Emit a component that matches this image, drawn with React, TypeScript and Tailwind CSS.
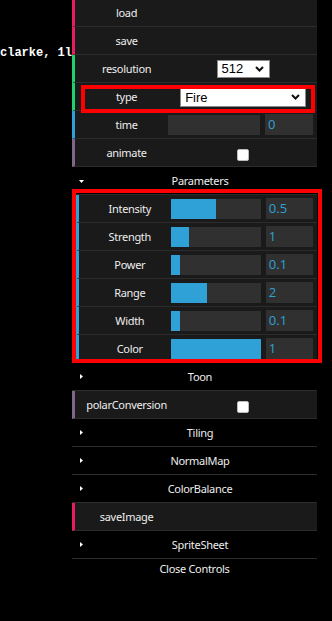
import React from 'react';

const FONT = { fontFamily: '"Noto Sans", "Open Sans", sans-serif' };

// dat.GUI style border colours per controller type
const BORDER: Record<string, string> = {
  fn: 'border-l-[#e61d5f]',
  bool: 'border-l-[#806787]',
  num: 'border-l-[#2fa1d6]',
  str: 'border-l-[#1ed36f]',
};

function Row({ kind, label, children }: { kind: string; label: string; children?: React.ReactNode }) {
  return (
    <div
      className={`flex h-[28px] items-center border-b border-l-[3px] border-b-[#2c2c2c] bg-[#1a1a1a] pl-[5px] pr-[4px] ${BORDER[kind]}`}
    >
      <div className="w-[40%] truncate pt-[2px] text-center text-[11px] tracking-[-0.3px] text-[#eeeeee]">{label}</div>
      <div className="flex h-full w-[60%] items-center">{children}</div>
    </div>
  );
}

function Select({ value, wide }: { value: string; wide?: boolean }) {
  return (
    <div
      className={`mx-auto flex items-center justify-between border border-[#8a8a8a] bg-white pl-[4px] pr-[5px] text-[13px] text-black ${
        wide ? 'mt-[1px] h-[20px] w-[90%]' : 'h-[18px] w-[53px]'
      }`}
      style={{ fontFamily: '"Liberation Sans", Arial, sans-serif' }}
    >
      <span className="leading-none">{value}</span>
      <svg width="9" height="6" viewBox="0 0 9 6" className="shrink-0">
        <path d="M1 1 L4.5 4.5 L8 1" fill="none" stroke="#111" strokeWidth="2" />
      </svg>
    </div>
  );
}

function Slider({ frac, value }: { frac: number; value: string }) {
  return (
    <>
      <div className="-ml-[5px] h-[20px] w-[66%] bg-[#303030]">
        <div className="h-full bg-[#2fa1d6]" style={{ width: `${frac * 100}%` }} />
      </div>
      <div
        className="ml-auto flex h-[21px] w-[calc(30%+6px)] items-center bg-[#303030] pl-[3px] text-[13px] text-[#2fa1d6]"
        style={{ fontFamily: '"Open Sans", sans-serif' }}
      >
        {value}
      </div>
    </>
  );
}

function Checkbox() {
  return (
    <div className="mx-auto mt-[4px] h-[12px] w-[12px] rounded-[2px] border border-[#bbbbbb] bg-white" />
  );
}

function Title({ label, open }: { label: string; open?: boolean }) {
  return (
    <div className="flex h-[28px] items-center border-b border-[#2c2c2c] bg-black pl-[7px] pr-[1px]">
      {open ? (
        <svg width="5" height="3" viewBox="0 0 5 3" className="mt-[1px] shrink-0">
          <path d="M0 0 H5 L2.5 3 Z" fill="#fff" />
        </svg>
      ) : (
        <svg width="5" height="5" viewBox="0 0 5 5" className="shrink-0">
          <path d="M1 0 L4 2.5 L1 5 Z" fill="#fff" />
        </svg>
      )}
      <span className="flex-1 pt-[2px] text-center text-[11px] tracking-[-0.3px] text-[#eeeeee]">{label}</span>
    </div>
  );
}

const params = [
  { label: 'Intensity', frac: 0.5, value: '0.5' },
  { label: 'Strength', frac: 0.2, value: '1' },
  { label: 'Power', frac: 0.1, value: '0.1' },
  { label: 'Range', frac: 0.4, value: '2' },
  { label: 'Width', frac: 0.1, value: '0.1' },
  { label: 'Color', frac: 1, value: '1' },
];

export default function App() {
  return (
    <div className="relative flex h-[621px] w-[332px] overflow-hidden bg-black" style={FONT}>
      {/* page text behind the controls */}
      <div className="w-[72px] shrink-0 overflow-hidden pt-[38px]">
        <span
          className="whitespace-nowrap text-[12px] font-bold leading-[16px] text-white"
          style={{ fontFamily: '"Liberation Mono", "DejaVu Sans Mono", monospace' }}
        >
          clarke, 1l
        </span>
      </div>

      {/* controls panel */}
      <div className="-mt-px w-[245px] shrink-0">
        <Row kind="fn" label="load" />
        <Row kind="fn" label="save" />
        <Row kind="str" label="resolution">
          <Select value="512" />
        </Row>
        <Row kind="str" label="type">
          <Select value="Fire" wide />
        </Row>
        <Row kind="num" label="time">
          <Slider frac={0} value="0" />
        </Row>
        <Row kind="bool" label="animate">
          <Checkbox />
        </Row>

        <Title label="Parameters" open />
        <div className="pl-[4px]">
          {params.map((p) => (
            <Row key={p.label} kind="num" label={p.label}>
              <Slider frac={p.frac} value={p.value} />
            </Row>
          ))}
        </div>

        <Title label="Toon" />
        <Row kind="bool" label="polarConversion">
          <Checkbox />
        </Row>
        <Title label="Tiling" />
        <Title label="NormalMap" />
        <Title label="ColorBalance" />
        <Row kind="fn" label="saveImage" />
        <Title label="SpriteSheet" />
        <div className="h-[20px] bg-black text-center text-[11px] leading-[20px] tracking-[-0.3px] text-[#eeeeee]">
          Close Controls
        </div>
      </div>

      {/* red annotation boxes */}
      <div className="pointer-events-none absolute left-[81px] top-[85px] h-[28px] w-[234px] border-4 border-[#ff0000]" />
      <div className="pointer-events-none absolute left-[72px] top-[189px] h-[174px] w-[250px] border-4 border-[#ff0000]" />
    </div>
  );
}
